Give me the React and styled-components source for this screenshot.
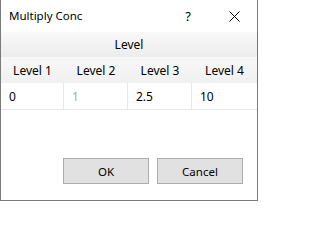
import React from 'react';
import styled, { createGlobalStyle } from 'styled-components';

const GlobalStyle = createGlobalStyle`
  html, body {
    margin: 0;
    padding: 0;
    background: #ffffff;
  }
  body {
    font-family: "Noto Sans", "Liberation Sans", sans-serif;
    font-size: 12px;
    color: #000000;
  }
`;

const Window = styled.div`
  box-sizing: border-box;
  width: 258px;
  height: 201px;
  border: 1px solid #7a7a7a;
  border-top: none;
  background: #ffffff;
  display: flex;
  flex-direction: column;
`;

const TitleBar = styled.div`
  height: 32px;
  display: flex;
  align-items: center;
  padding-left: 8px;
`;

const TitleText = styled.div`
  flex: 1;
  font-size: 11.5px;
  padding-bottom: 1px;
`;

const TitleButton = styled.div`
  width: ${(p) => p.w}px;
  height: 32px;
  display: flex;
  align-items: center;
  justify-content: center;
  font-size: 13px;
`;

const Grid = styled.div`
  display: grid;
  grid-template-columns: 63px 64px 64px 1fr;
`;

const GroupHeader = styled.div`
  grid-column: 1 / -1;
  height: 25px;
  display: flex;
  align-items: center;
  justify-content: center;
  background: linear-gradient(#f9f9f9, #ececec);
`;

const ColHeader = styled.div`
  height: 26px;
  display: flex;
  align-items: center;
  justify-content: center;
  background: linear-gradient(#f8f8f8, #f0f0f0);
`;

const Cell = styled.div`
  box-sizing: border-box;
  height: 27px;
  display: flex;
  align-items: center;
  padding-left: 8px;
  border-bottom: 1px solid #e6e6e6;
  border-right: ${(p) => (p.last ? 'none' : '1px solid #e6e6e6')};
  color: ${(p) => (p.disabled ? '#a8a8a8' : '#000000')};
`;

const Footer = styled.div`
  flex: 1;
  display: flex;
  justify-content: flex-end;
  align-items: flex-end;
  gap: 8px;
  padding: 0 14px 16px 0;
`;

const Button = styled.button`
  box-sizing: border-box;
  width: 86px;
  height: 26px;
  background: #e1e1e1;
  border: 1px solid #adadad;
  font-family: inherit;
  font-size: 11.5px;
  color: #000000;
  padding: 0;
`;

const levels = ['Level 1', 'Level 2', 'Level 3', 'Level 4'];
const values = [
  { v: '0' },
  { v: '1', disabled: true },
  { v: '2.5' },
  { v: '10' },
];

export default function App() {
  return (
    <>
      <GlobalStyle />
      <Window>
        <TitleBar>
          <TitleText>Multiply Conc</TitleText>
          <TitleButton w={46}>?</TitleButton>
          <TitleButton w={46}>
            <svg width="11" height="11" viewBox="0 0 11 11">
              <path d="M0.5 0.5 L10.5 10.5 M10.5 0.5 L0.5 10.5" stroke="#000" strokeWidth="1" fill="none" />
            </svg>
          </TitleButton>
        </TitleBar>

        <Grid>
          <GroupHeader>Level</GroupHeader>
          {levels.map((l) => (
            <ColHeader key={l}>{l}</ColHeader>
          ))}
          {values.map((c, i) => (
            <Cell key={i} disabled={c.disabled} last={i === values.length - 1}>
              {c.v}
            </Cell>
          ))}
        </Grid>

        <Footer>
          <Button>OK</Button>
          <Button>Cancel</Button>
        </Footer>
      </Window>
    </>
  );
}
